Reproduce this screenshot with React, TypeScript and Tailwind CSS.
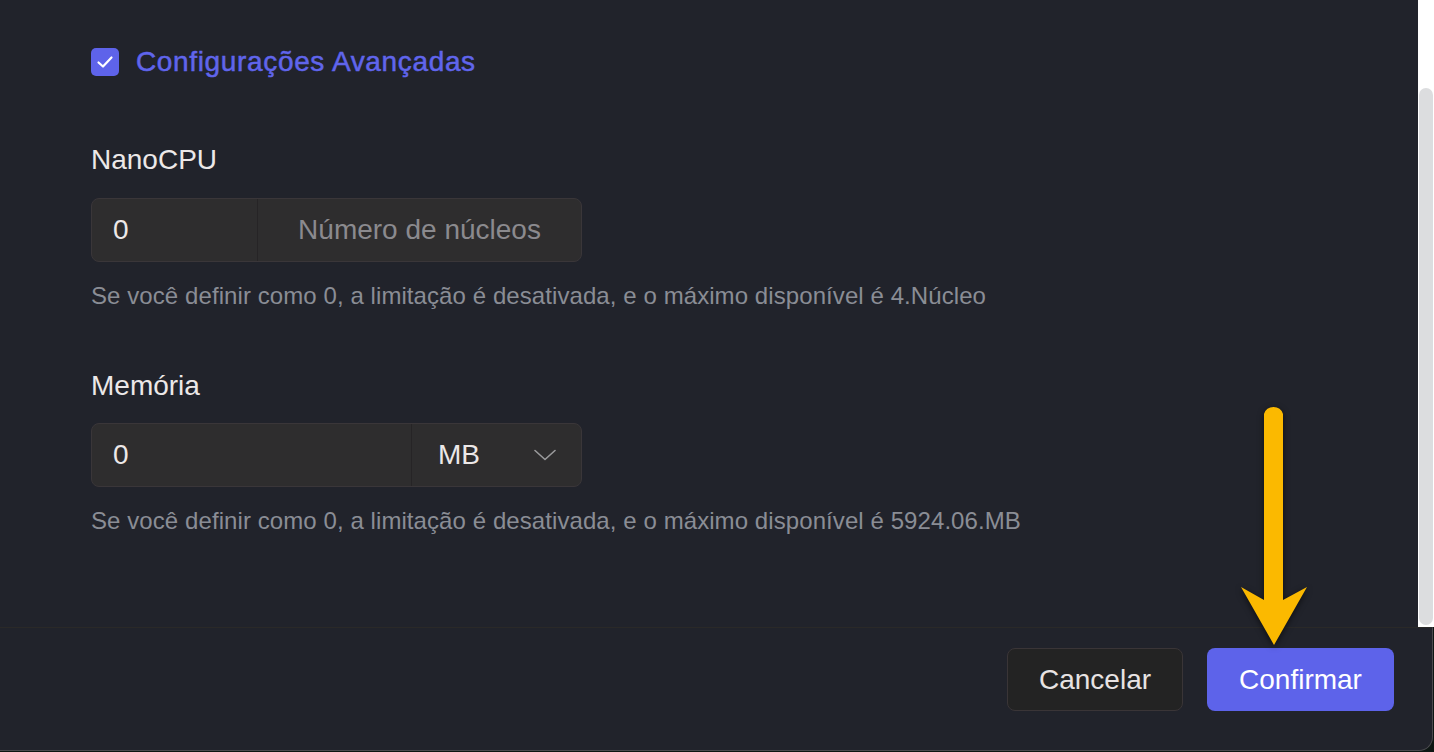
const font = "font-['Liberation_Sans','Helvetica',Arial,sans-serif]"

const Checkbox = () => (
  <div className="w-[28px] h-[28px] rounded-[5px] bg-[#5e63ea] flex items-center justify-center">
    <svg width="20" height="20" viewBox="0 0 20 20" fill="none">
      <path d="M3.5 10.5 L8 14.5 L16.5 5.5" stroke="white" strokeWidth="2.2" strokeLinecap="round" strokeLinejoin="round" />
    </svg>
  </div>
)

const Hint = ({ children }: { children: React.ReactNode }) => (
  <p className="mt-[20px] text-[24px] leading-[28px] tracking-[0.08px] text-[#8a8d95]">{children}</p>
)

const Chevron = () => (
  <svg width="22" height="12" viewBox="0 0 22 12" fill="none">
    <path d="M1 1.5 L11 10.5 L21 1.5" stroke="#9a9a9c" strokeWidth="1.6" strokeLinecap="round" strokeLinejoin="round" />
  </svg>
)

const Arrow = () => (
  <svg
    className="absolute left-[1230px] top-[395px] drop-shadow-[0_2px_3px_rgba(0,0,0,0.6)]"
    width="100"
    height="260"
    viewBox="0 0 100 260"
  >
    <path
      d="M34 19 A10 10 0 0 1 53 19 L53 205 L77 192 L44 250 L11 192 L34 205 Z"
      fill="#fbb900"
    />
  </svg>
)

export default function App() {
  return (
    <div className={`relative w-[1434px] h-[752px] overflow-hidden bg-[#0d1613] ${font}`}>
      <div className="flex flex-col h-[751px]">
        <div className="flex h-[627px] bg-[#21232b]">
          <div className="flex-1 pl-[91px] pt-[48px]">
            <div className="flex items-center gap-[17px]">
              <Checkbox />
              <span className="text-[28px] leading-[28px] tracking-[0.65px] text-[#6065ec] [-webkit-text-stroke:0.5px_#6065ec]">
                Configurações Avançadas
              </span>
            </div>

            <div className="mt-[68px]">
              <label className="block text-[28px] leading-[32px] text-[#ece8e8]">NanoCPU</label>
              <div className="mt-[22px] flex w-[491px] h-[64px] rounded-[8px] border border-[#3a3639] bg-[#2e2d2e] text-[28px]">
                <div className="w-[166px] flex items-center pl-[21px] text-[#ece8e8] border-r border-[#262426]">0</div>
                <div className="flex-1 flex items-center justify-center text-[#8b8a8e]">Número de núcleos</div>
              </div>
              <Hint>Se você definir como 0, a limitação é desativada, e o máximo disponível é 4.Núcleo</Hint>
            </div>

            <div className="mt-[60px]">
              <label className="block text-[28px] leading-[32px] text-[#ece8e8]">Memória</label>
              <div className="mt-[21px] flex w-[491px] h-[64px] rounded-[8px] border border-[#3a3639] bg-[#2e2d2e] text-[28px]">
                <div className="w-[320px] flex items-center pl-[21px] text-[#ece8e8] border-r border-[#262426]">0</div>
                <div className="flex-1 flex items-center justify-between pl-[26px] pr-[25px] text-[#ece8e8]">
                  <span>MB</span>
                  <Chevron />
                </div>
              </div>
              <Hint>Se você definir como 0, a limitação é desativada, e o máximo disponível é 5924.06.MB</Hint>
            </div>
          </div>

          <div className="w-[16px] bg-white pt-[88px] pb-[2px] pl-[1px] pr-[1px]">
            <div className="h-full rounded-full bg-[#dcdddf]" />
          </div>
        </div>

        <div className="flex-1 w-[1433px] bg-[#21232b] border-t border-t-[#2a2928] border-r border-b border-[#4a4a4e] rounded-br-[14px] flex justify-end items-start pt-[20px] pr-[38px] gap-[24px]">
          <button className="h-[63px] w-[176px] rounded-[8px] border border-[#3a3537] bg-[#232323] text-[28px] text-[#e8e3e3]">
            Cancelar
          </button>
          <button className="h-[63px] w-[187px] rounded-[8px] bg-[#5d63ea] text-[28px] text-white">
            Confirmar
          </button>
        </div>
      </div>
      <Arrow />
    </div>
  )
}
